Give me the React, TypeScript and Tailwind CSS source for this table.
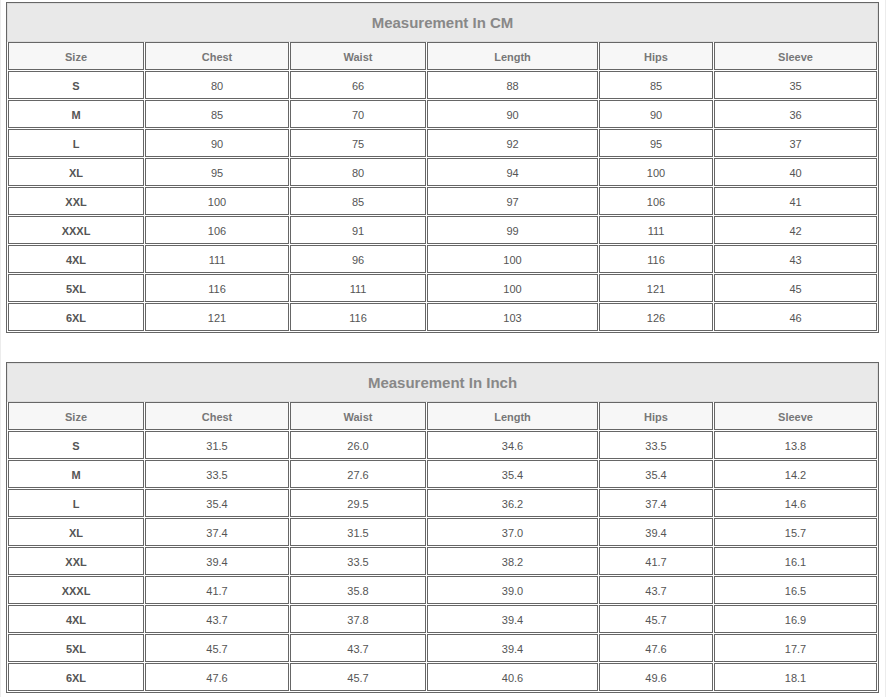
const columns = ['Size', 'Chest', 'Waist', 'Length', 'Hips', 'Sleeve'];

const cmRows = [
  ['S', '80', '66', '88', '85', '35'],
  ['M', '85', '70', '90', '90', '36'],
  ['L', '90', '75', '92', '95', '37'],
  ['XL', '95', '80', '94', '100', '40'],
  ['XXL', '100', '85', '97', '106', '41'],
  ['XXXL', '106', '91', '99', '111', '42'],
  ['4XL', '111', '96', '100', '116', '43'],
  ['5XL', '116', '111', '100', '121', '45'],
  ['6XL', '121', '116', '103', '126', '46'],
];

const inchRows = [
  ['S', '31.5', '26.0', '34.6', '33.5', '13.8'],
  ['M', '33.5', '27.6', '35.4', '35.4', '14.2'],
  ['L', '35.4', '29.5', '36.2', '37.4', '14.6'],
  ['XL', '37.4', '31.5', '37.0', '39.4', '15.7'],
  ['XXL', '39.4', '33.5', '38.2', '41.7', '16.1'],
  ['XXXL', '41.7', '35.8', '39.0', '43.7', '16.5'],
  ['4XL', '43.7', '37.8', '39.4', '45.7', '16.9'],
  ['5XL', '45.7', '43.7', '39.4', '47.6', '17.7'],
  ['6XL', '47.6', '45.7', '40.6', '49.6', '18.1'],
];

function SizeTable({ title, rows }: { title: string; rows: string[][] }) {
  return (
    <div className="w-[873px] border border-[#666] pb-px">
      {/* Title row */}
      <div className="h-[39px] pt-[2px] border border-[#dcdcdc] bg-[#e9e9e9] flex items-center justify-center text-[15px] font-bold text-[#888]">
        {title}
      </div>

      <div className="mx-px grid grid-cols-[136px_144px_136px_171px_114px_163px] gap-px">
        {columns.map((c) => (
          <div
            key={c}
            className="h-[28px] pt-[2px] border border-[#666] bg-[#f7f7f7] flex items-center justify-center text-[11px] font-bold text-[#777]"
          >
            {c}
          </div>
        ))}
        {rows.map((row) =>
          row.map((v, i) => (
            <div
              key={row[0] + i}
              className={
                i === 0
                  ? 'h-[28px] pt-[2px] border border-[#666] bg-white flex items-center justify-center text-[11px] font-bold text-[#555]'
                  : 'h-[28px] pt-[2px] border border-[#666] bg-white flex items-center justify-center text-[11px] text-[#555]'
              }
            >
              {v}
            </div>
          ))
        )}
      </div>
    </div>
  );
}

export default function App() {
  return (
    <div className="min-h-screen bg-white" style={{ fontFamily: '"Liberation Sans", Arial, sans-serif' }}>
      <div className="w-[886px] min-h-[697px] border-x border-[#ececec] pl-[5px] pt-[2px]">
        <SizeTable title="Measurement In CM" rows={cmRows} />
        <div className="mt-[29px]">
          <SizeTable title="Measurement In Inch" rows={inchRows} />
        </div>
      </div>
    </div>
  );
}
